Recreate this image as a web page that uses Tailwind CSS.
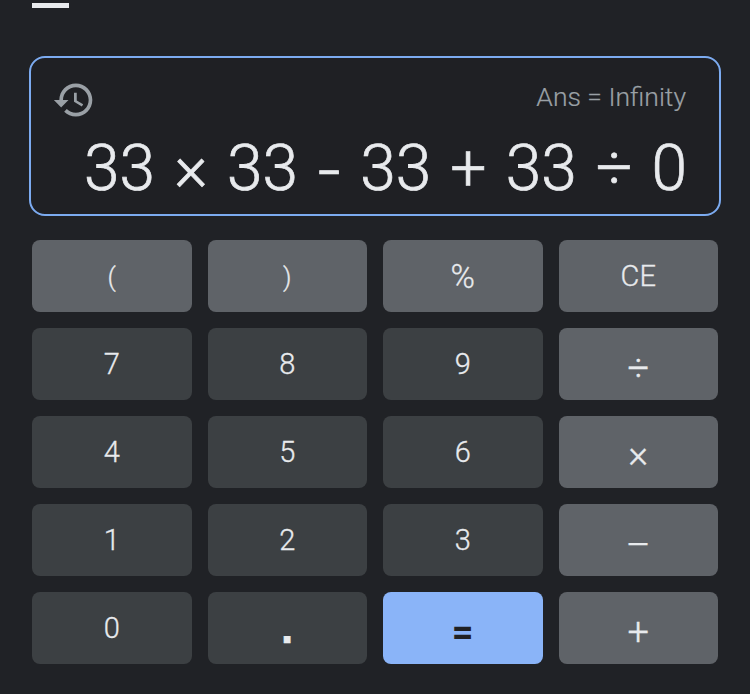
<!DOCTYPE html>
<html lang="en">
<head>
    <meta charset="UTF-8">
    <meta name="viewport" content="width=device-width, initial-scale=1.0">
    <title>Calculator</title>
    <script src="https://cdn.jsdelivr.net/npm/@tailwindcss/browser@4"></script>
</head>
<body class="bg-[#202226] font-['Roboto',Arial,sans-serif] w-[750px] h-[694px] overflow-hidden">
    <!-- Tab indicator -->
    <div class="pt-[3px] pl-[32px]">
        <div class="w-[37px] h-[5px] bg-[#e8eaed]"></div>
    </div>

    <!-- Display -->
    <section class="mt-[48px] ml-[29px] w-[692px] h-[160px] border-2 border-[#7cabf0] rounded-[16px] bg-[#1f2024] pl-[21px] pr-[32px] pt-[20px]">
        <div class="flex justify-between items-start">
            <svg class="w-[44px] h-[44px] fill-[#9aa0a6]" viewBox="0 0 24 24">
                <path d="M13 3c-4.97 0-9 4.03-9 9H1l3.89 3.89.07.14L9 12H6c0-3.87 3.13-7 7-7s7 3.13 7 7-3.13 7-7 7c-1.93 0-3.68-.79-4.94-2.06l-1.42 1.42C8.27 19.99 10.51 21 13 21c4.97 0 9-4.03 9-9s-4.03-9-9-9zm-1 5v5l4.28 2.54.72-1.21-3.5-2.08V8H12z"/>
            </svg>
            <div class="text-[26.5px] leading-[30px] mt-[4px] mr-[1px] font-light text-[#9aa0a6] [-webkit-text-stroke:0.2px_#9aa0a6]">Ans = Infinity</div>
        </div>
        <div class="text-right text-[64px] leading-[70px] mt-[12px] font-light text-[#e8eaed] [-webkit-text-stroke:0.7px_#e8eaed] [word-spacing:3.6px] whitespace-nowrap">33 × 33 <span class="inline-block scale-x-125 ml-[3px] mr-[2.5px] translate-y-[3px]">-</span> 33 + 33 ÷ 0</div>
    </section>

    <!-- Keypad -->
    <div class="mt-[24px] ml-[32px] w-[686px] grid grid-cols-4 gap-[16px] auto-rows-[72px] text-[#e8eaed] text-[29px] font-light [-webkit-text-stroke:0.3px_#e8eaed]">
        <button class="bg-[#5f6368] rounded-[8px] pt-[2px] text-[26px]">(</button>
        <button class="bg-[#5f6368] rounded-[8px] pt-[2px] text-[26px]">)</button>
        <button class="bg-[#5f6368] rounded-[8px] pt-[2px] text-[33px]">%</button>
        <button class="bg-[#5f6368] rounded-[8px] pt-[2px]">CE</button>

        <button class="bg-[#3c4043] rounded-[8px] pt-[2px]">7</button>
        <button class="bg-[#3c4043] rounded-[8px] pt-[2px]">8</button>
        <button class="bg-[#3c4043] rounded-[8px] pt-[2px]">9</button>
        <button class="bg-[#5f6368] rounded-[8px] pt-[8px] text-[38px]">÷</button>

        <button class="bg-[#3c4043] rounded-[8px] pt-[2px]">4</button>
        <button class="bg-[#3c4043] rounded-[8px] pt-[2px]">5</button>
        <button class="bg-[#3c4043] rounded-[8px] pt-[2px]">6</button>
        <button class="bg-[#5f6368] rounded-[8px] pt-[4px] text-[38px]">×</button>

        <button class="bg-[#3c4043] rounded-[8px] pt-[2px]">1</button>
        <button class="bg-[#3c4043] rounded-[8px] pt-[2px]">2</button>
        <button class="bg-[#3c4043] rounded-[8px] pt-[2px]">3</button>
        <button class="bg-[#5f6368] rounded-[8px] pt-[10px] text-[38px]">–</button>

        <button class="bg-[#3c4043] rounded-[8px] pt-[2px]">0</button>
        <button class="bg-[#3c4043] rounded-[8px] pb-[2px] font-['Liberation_Sans',Arial,sans-serif] font-bold text-[46px]">.</button>
        <button class="bg-[#8ab4f8] rounded-[8px] pt-[8px] text-[#202124] font-bold text-[38px] [-webkit-text-stroke:0]">=</button>
        <button class="bg-[#5f6368] rounded-[8px] pt-[8px] text-[38px]">+</button>
    </div>
</body>
</html>
